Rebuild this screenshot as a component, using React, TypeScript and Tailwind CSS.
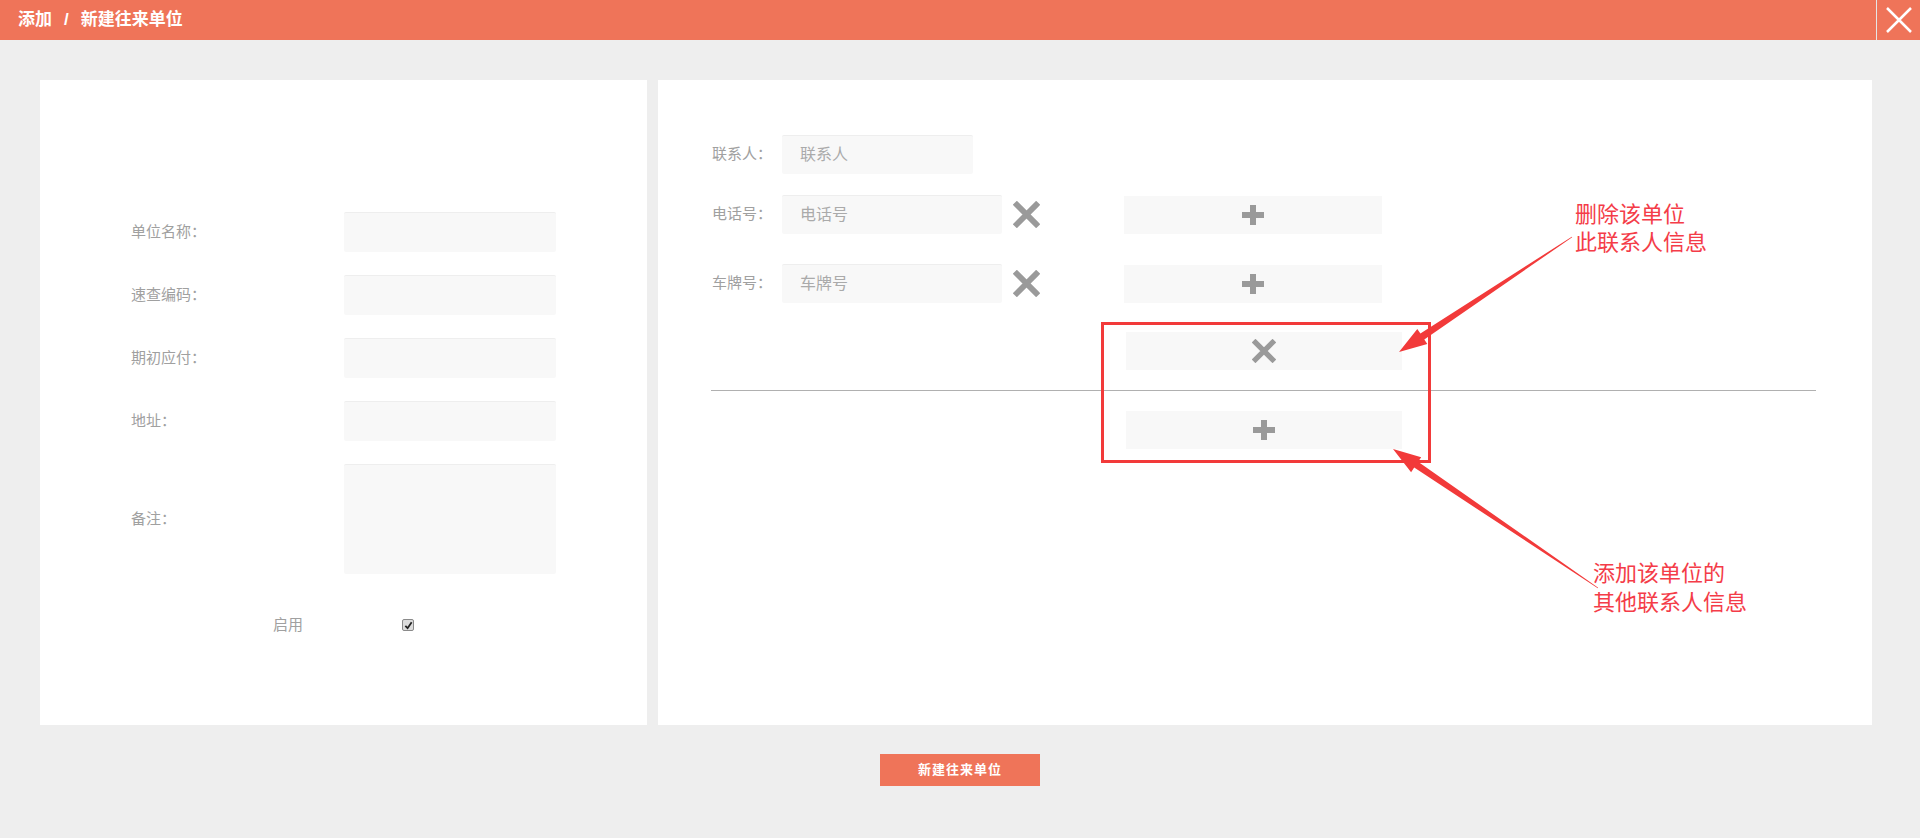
import React from 'react';

const font = { fontFamily: '"Liberation Sans", "Noto Sans CJK SC", sans-serif' };

const XIcon = ({ className = 'w-[27px] h-[27px]' }: { className?: string }) => (
  <svg viewBox="0 0 28 28" className={className}>
    <path d="M4 4 L24 24 M24 4 L4 24" stroke="#9a9a9a" strokeWidth="6" strokeLinecap="square" />
  </svg>
);

const PlusIcon = () => (
  <svg viewBox="0 0 26 22" className="w-[26px] h-[22px]">
    <path d="M13 1 V21 M2 11 H24" stroke="#9a9a9a" strokeWidth="6" />
  </svg>
);

// tapered arrow from (x1,y1) to tip (x2,y2)
const arrowPoints = (x1: number, y1: number, x2: number, y2: number) => {
  const dx = x2 - x1;
  const dy = y2 - y1;
  const len = Math.hypot(dx, dy);
  const ux = dx / len;
  const uy = dy / len;
  const nx = -uy;
  const ny = ux;
  const head = 28;
  const bx = x2 - head * ux;
  const by = y2 - head * uy;
  const p = (x: number, y: number) => `${x.toFixed(1)},${y.toFixed(1)}`;
  return [
    p(x1 + 0.4 * nx, y1 + 0.4 * ny),
    p(bx + 3.5 * nx, by + 3.5 * ny),
    p(bx + 9 * nx, by + 9 * ny),
    p(x2, y2),
    p(bx - 9 * nx, by - 9 * ny),
    p(bx - 3.5 * nx, by - 3.5 * ny),
    p(x1 - 0.4 * nx, y1 - 0.4 * ny),
  ].join(' ');
};

const leftFields = ['单位名称：', '速查编码：', '期初应付：', '地址：'];

const App: React.FC = () => {
  return (
    <div className="relative w-[1920px] h-[838px] bg-[#eeeeee] overflow-hidden" style={font}>
      {/* header */}
      <div className="h-[40px] bg-[#ef7459] flex items-center">
        <div className="flex-1 pl-[18px] text-white font-bold text-[17px] flex items-center gap-[12px]">
          <span>添加</span>
          <span>/</span>
          <span>新建往来单位</span>
        </div>
        <div className="w-[44px] h-[40px] border-l border-[#e6e6e6] flex items-center justify-center">
          <svg viewBox="0 0 28 28" className="w-[28px] h-[28px]">
            <path d="M2 2 L26 26 M26 2 L2 26" stroke="white" strokeWidth="2.5" />
          </svg>
        </div>
      </div>

      {/* panels */}
      <div className="flex gap-[11px] pt-[40px] pl-[40px]">
        {/* left */}
        <div className="w-[607px] h-[645px] bg-white pt-[132px] pl-[91px]">
          <div className="flex flex-col gap-[23px]">
            {leftFields.map((l) => (
              <div key={l} className="flex items-center">
                <span className="w-[213px] text-[15px] text-[#a0a0a0]">{l}</span>
                <div className="w-[212px] h-[40px] bg-[#f8f8f8] rounded-[2px] border-t border-[#eeeeee]" />
              </div>
            ))}
            <div className="flex items-center">
              <span className="w-[213px] text-[15px] text-[#a0a0a0]">备注：</span>
              <div className="w-[212px] h-[110px] bg-[#f8f8f8] rounded-[2px] border-t border-[#eeeeee]" />
            </div>
          </div>
          <div className="flex items-center mt-[40px] pl-[142px]">
            <span className="w-[129px] text-[15px] text-[#a0a0a0]">启用</span>
            <span className="w-[12px] h-[12px] rounded-[2px] border border-[#8a8a8a] bg-[#dcdcdc] flex items-center justify-center">
              <svg viewBox="0 0 10 10" className="w-[9px] h-[9px]">
                <path d="M1.5 5.5 L4 8 L8.5 1.5" stroke="#222" strokeWidth="2" fill="none" />
              </svg>
            </span>
          </div>
        </div>

        {/* right */}
        <div className="w-[1214px] h-[645px] bg-white pt-[55px] pl-[54px]">
          <div className="flex items-center">
            <span className="w-[70px] text-[15px] text-[#a0a0a0]">联系人：</span>
            <div className="w-[191px] h-[39px] bg-[#f8f8f8] rounded-[2px] border-t border-[#eeeeee] pl-[18px] flex items-center text-[16px] text-[#aaa]">
              联系人
            </div>
          </div>
          {['电话号', '车牌号'].map((l, i) => (
            <div key={l} className={`flex items-center ${i === 0 ? 'mt-[21px]' : 'mt-[30px]'}`}>
              <span className="w-[70px] text-[15px] text-[#a0a0a0]">{l}：</span>
              <div className="w-[220px] h-[39px] bg-[#f8f8f8] rounded-[2px] border-t border-[#eeeeee] pl-[18px] flex items-center text-[16px] text-[#aaa]">
                {l}
              </div>
              <div className="ml-[11px]">
                <XIcon />
              </div>
              <div className="ml-[84px] w-[258px] h-[38px] bg-[#f8f8f8] flex items-center justify-center">
                <PlusIcon />
              </div>
            </div>
          ))}
          <div className="ml-[414px] mt-[29px] w-[276px] h-[38px] bg-[#f8f8f8] flex items-center justify-center">
            <XIcon className="w-[24px] h-[24px]" />
          </div>
          <div className="mt-[20px] w-[1105px] h-[1px] bg-[#b0b0b0] -ml-[1px]" />
          <div className="ml-[414px] mt-[20px] w-[276px] h-[38px] bg-[#f8f8f8] flex items-center justify-center">
            <PlusIcon />
          </div>
        </div>
      </div>

      {/* submit */}
      <div className="flex justify-center mt-[29px]">
        <button className="w-[160px] h-[32px] bg-[#ef7459] text-white text-[13px] font-bold tracking-[1px]">新建往来单位</button>
      </div>

      {/* annotation overlay */}
      <div className="absolute left-[1575px] top-[201px] text-[22px] leading-[28px] text-[#f43c48]">
        删除该单位
        <br />
        此联系人信息
      </div>
      <div className="absolute left-[1593px] top-[559px] text-[22px] leading-[29px] text-[#f43c48]">
        添加该单位的
        <br />
        其他联系人信息
      </div>
      <div className="absolute left-[1101px] top-[322px] w-[330px] h-[141px] border-[3px] border-[#f23a3a]" />
      <svg className="absolute left-0 top-0 pointer-events-none" width="1920" height="838" viewBox="0 0 1920 838">
        <polygon points={arrowPoints(1572, 237, 1399, 352)} fill="#f23a3a" />
        <polygon points={arrowPoints(1598, 588, 1393, 449)} fill="#f23a3a" />
      </svg>
    </div>
  );
};

export default App;
